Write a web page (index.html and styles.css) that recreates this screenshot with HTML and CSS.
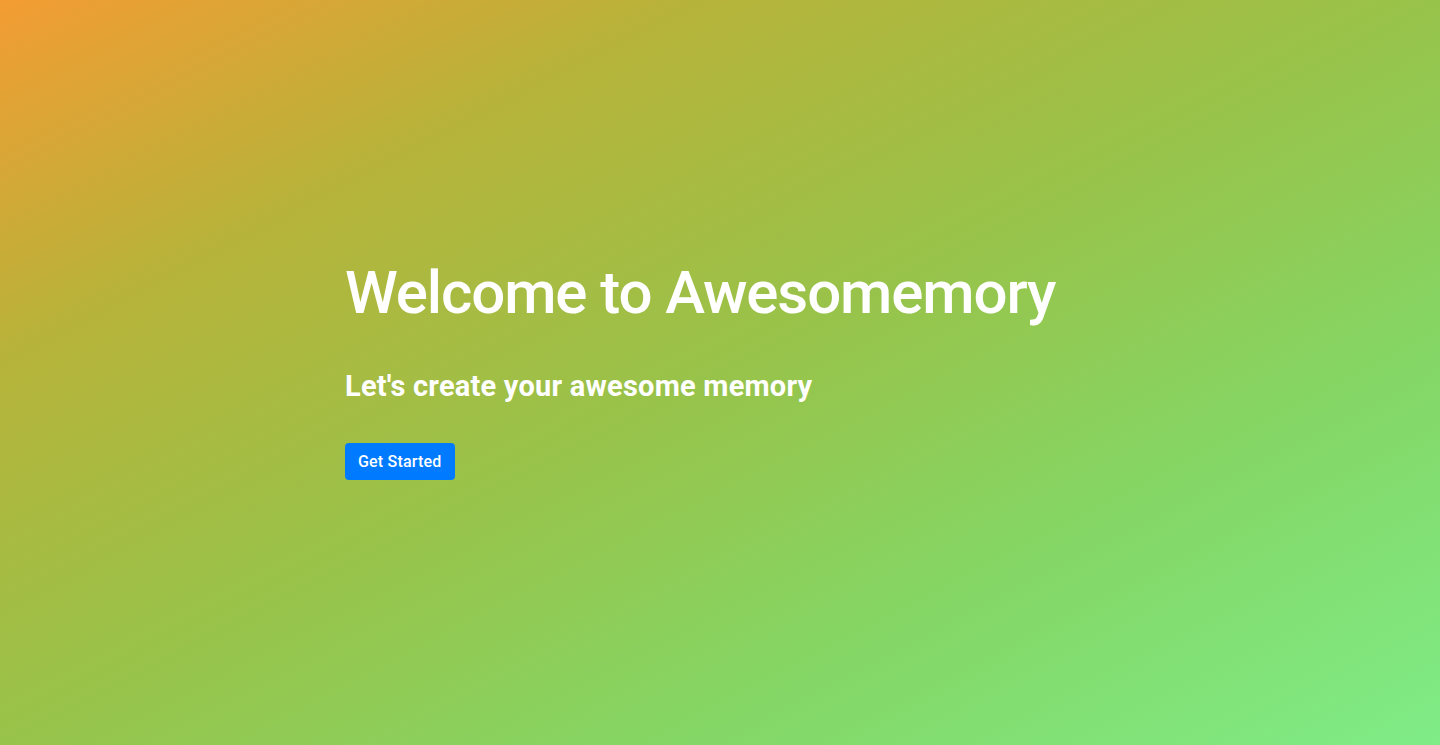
FILE: index.html
```html
<!DOCTYPE html>
<html lang="en">
<head>
<meta charset="utf-8">
<title>Awesomemory</title>
<link rel="stylesheet" href="styles.css">
</head>
<body>
<section class="hero">
  <div class="container">
    <div class="content">
      <h1 class="title">Welcome to Awesomemory</h1>
      <h2 class="subtitle">Let's create your awesome memory</h2>
      <a class="btn" href="#">Get Started</a>
    </div>
  </div>
</section>
</body>
</html>
```
FILE: styles.css
```css
* { box-sizing: border-box; }
html, body { margin: 0; padding: 0; height: 100%; }
body {
  font-family: Roboto, "Liberation Sans", sans-serif;
  color: #fff;
}
.hero {
  min-height: 100vh;
  display: flex;
  align-items: center;
  padding-bottom: 8px;
  background: linear-gradient(to bottom right, #f39c33 0%, #b7b33a 24%, #98c34a 50%, #84d766 74%, #7fec87 100%);
}
.container {
  width: 1140px;
  margin: 0 auto;
  padding: 0 15px;
}
.content {
  margin-left: 180px;
  width: 900px;
}
.title {
  font-size: 60px;
  font-weight: 500;
  line-height: 72px;
  margin: 0 0 40px;
  letter-spacing: -1.1px;
}
.subtitle {
  font-size: 29px;
  font-weight: 700;
  line-height: 34px;
  margin: 0 0 40px;
  letter-spacing: 0.22px;
}
.btn {
  display: inline-block;
  background: #007bff;
  color: #fff;
  text-decoration: none;
  font-size: 16px;
  font-weight: 500;
  line-height: 25px;
  padding: 6px 13px;
  border-radius: 4px;
  letter-spacing: 0.2px;
}
```
